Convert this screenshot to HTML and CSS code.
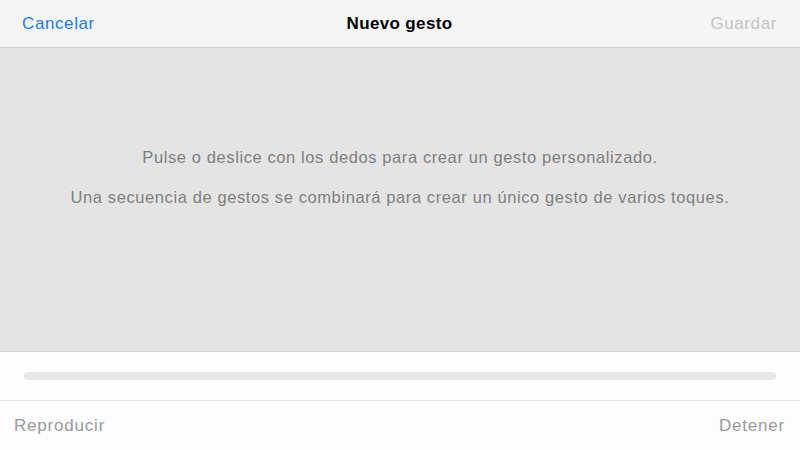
FILE: index.html
```html
<!DOCTYPE html>
<html lang="es">
<head>
<meta charset="utf-8">
<title>Nuevo gesto</title>
<link rel="stylesheet" href="styles.css">
</head>
<body>
<div class="screen">
  <header class="navbar">
    <span class="nav-btn nav-cancel">Cancelar</span>
    <span class="nav-title">Nuevo gesto</span>
    <span class="nav-btn nav-save">Guardar</span>
  </header>
  <main class="canvas">
    <p class="hint">Pulse o deslice con los dedos para crear un gesto personalizado.</p>
    <p class="hint">Una secuencia de gestos se combinará para crear un único gesto de varios toques.</p>
  </main>
  <section class="progress-row">
    <div class="progress-track"></div>
  </section>
  <footer class="toolbar">
    <span class="tool-btn">Reproducir</span>
    <span class="tool-btn">Detener</span>
  </footer>
</div>
</body>
</html>
```
FILE: styles.css
```css
* { box-sizing: border-box; }
html, body { margin: 0; padding: 0; }
body {
  width: 800px;
  height: 450px;
  overflow: hidden;
  font-family: "Liberation Sans", Arial, sans-serif;
  background: #fdfdfd;
}
.screen {
  display: flex;
  flex-direction: column;
  height: 450px;
}
.navbar {
  height: 48px;
  flex: none;
  background: #f5f5f5;
  border-bottom: 1px solid #cfcfcf;
  display: grid;
  grid-template-columns: 1fr auto 1fr;
  align-items: center;
  padding: 0 23px 0 22px;
  font-size: 17px;
  letter-spacing: 0.6px;
}
.nav-cancel { color: #1a7cf5; justify-self: start; }
.nav-save { color: #c3c3c3; justify-self: end; }
.nav-title { color: #000; font-weight: 600; letter-spacing: 0.35px; }
.canvas {
  height: 304px;
  flex: none;
  background: #e4e4e4;
  border-bottom: 1px solid #d3d3d3;
  display: flex;
  flex-direction: column;
  align-items: center;
  padding-top: 99px;
}
.hint {
  margin: 0 0 20px;
  font-size: 16.5px;
  line-height: 20px;
  letter-spacing: 0.6px;
  color: #7f7f7f;
}
.progress-row {
  height: 49px;
  flex: none;
  background: #fdfdfd;
  border-bottom: 1px solid #e3e3e3;
  padding: 20px 24px 0;
}
.progress-track {
  height: 8px;
  border-radius: 4px;
  background: #e7e7e7;
}
.toolbar {
  flex: 1;
  display: flex;
  justify-content: space-between;
  align-items: center;
  padding: 0 15px 0 14px;
  font-size: 17px;
  letter-spacing: 0.8px;
  color: #9a9a9a;
  background: #fdfdfd;
}
```
